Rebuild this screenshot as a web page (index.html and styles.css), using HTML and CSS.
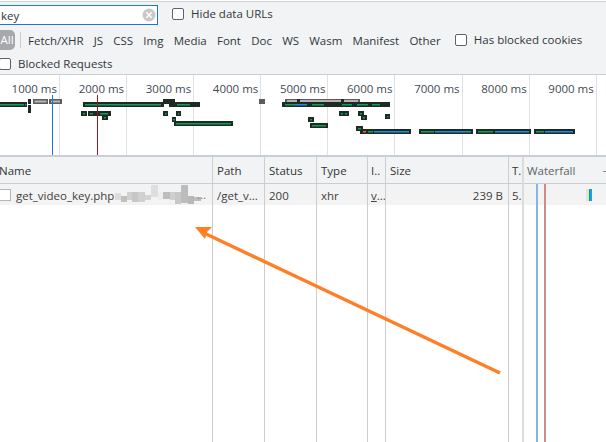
FILE: index.html
```html
<!DOCTYPE html>
<html lang="en">
<head>
<meta charset="utf-8">
<title>Network panel</title>
<link rel="stylesheet" href="styles.css">
</head>
<body>
<div class="page">
  <section class="toolbar">
    <div class="row row-search">
      <div class="search">
        <span class="search-text">key</span>
        <svg class="clear" width="14" height="14" viewBox="0 0 14 14"><circle cx="7" cy="7" r="6.500" fill="#c9c9c9"/><path d="M4.300 4.300l5.400 5.400M9.700 4.300l-5.400 5.400" stroke="#fff" stroke-width="1.400"/></svg>
      </div>
      <label class="check check-hide"><span class="box"></span>Hide data URLs</label>
    </div>
    <div class="row row-types">
      <span class="pill">All</span>
      <span class="sep"></span>
      <span class="type">Fetch/XHR</span>
      <span class="type">JS</span>
      <span class="type">CSS</span>
      <span class="type">Img</span>
      <span class="type">Media</span>
      <span class="type">Font</span>
      <span class="type">Doc</span>
      <span class="type">WS</span>
      <span class="type">Wasm</span>
      <span class="type">Manifest</span>
      <span class="type">Other</span>
      <label class="check check-cookies"><span class="box"></span>Has blocked cookies</label>
    </div>
    <div class="row row-blocked">
      <label class="check"><span class="box"></span>Blocked Requests</label>
    </div>
  </section>

  <section class="overview">
    <div class="ticks">
      <span class="tick">1000 ms</span>
      <span class="tick">2000 ms</span>
      <span class="tick">3000 ms</span>
      <span class="tick">4000 ms</span>
      <span class="tick">5000 ms</span>
      <span class="tick">6000 ms</span>
      <span class="tick">7000 ms</span>
      <span class="tick">8000 ms</span>
      <span class="tick">9000 ms</span>
    </div>
    <svg class="bars" width="606" height="80" viewBox="0 75 606 80">
      <g class="grey">
        <rect x="33" y="99" width="15" height="5"/><rect x="49" y="99" width="13" height="5"/>
        <rect x="259" y="99" width="6" height="5"/><rect x="285" y="99" width="75" height="4"/>
      </g>
      <g class="greyin">
        <rect x="34.500" y="100.500" width="12" height="2"/><rect x="51" y="100.500" width="9" height="2"/>
        <rect x="287" y="100" width="71" height="2"/>
      </g>
      <g class="dark">
        <rect x="28" y="99" width="3" height="5"/><rect x="28" y="105" width="3" height="8"/>
        <rect x="163" y="99" width="12" height="5"/><rect x="297" y="99" width="3" height="4"/><rect x="341" y="99" width="3" height="4"/>
        <rect x="0" y="102" width="27" height="5"/><rect x="83" y="102" width="81" height="5"/><rect x="169" y="102" width="31" height="5"/><rect x="282" y="102" width="108" height="5"/>
        <rect x="81" y="111" width="6" height="5"/><rect x="88" y="111" width="9" height="5"/><rect x="98" y="111" width="13" height="5"/><rect x="102" y="115" width="6" height="5"/>
        <rect x="163" y="111" width="5" height="5"/><rect x="176" y="111" width="5" height="5"/>
        <rect x="172" y="117" width="4" height="5"/><rect x="174" y="121" width="59" height="5"/>
        <rect x="339" y="111" width="10" height="5"/><rect x="358" y="111" width="6" height="5"/><rect x="361" y="115" width="6" height="5"/><rect x="385" y="114" width="5" height="5"/>
        <rect x="308" y="117" width="6" height="5"/><rect x="310" y="123" width="18" height="5"/><rect x="356" y="126" width="7" height="5"/>
        <rect x="360" y="129" width="51" height="5"/><rect x="419" y="129" width="54" height="5"/><rect x="476" y="129" width="55" height="5"/><rect x="534" y="129" width="41" height="5"/>
      </g>
      <g class="green">
        <rect x="0" y="104" width="24" height="1.500"/><rect x="85" y="104" width="76" height="1.500"/><rect x="177" y="104" width="13" height="1.500"/>
        <rect x="285" y="104" width="10" height="1.500"/><rect x="312" y="104" width="12" height="1.500"/><rect x="342" y="104" width="10" height="1.500"/><rect x="358" y="104" width="10" height="1.500"/><rect x="372" y="104" width="8" height="1.500"/>
        <rect x="83" y="113" width="2" height="1.500"/><rect x="90" y="113" width="3" height="1.500"/><rect x="100" y="113" width="8" height="1.500"/><rect x="104" y="117" width="2" height="1.500"/>
        <rect x="165" y="113" width="1.500" height="1.500"/><rect x="178" y="113" width="1.500" height="1.500"/><rect x="173" y="119" width="2" height="1.500"/><rect x="176" y="123" width="55" height="1.500"/>
        <rect x="341" y="113" width="2" height="1.500"/><rect x="345" y="113" width="2" height="1.500"/><rect x="360" y="113" width="2" height="1.500"/><rect x="363" y="117" width="2" height="1.500"/><rect x="387" y="116" width="1.500" height="1.500"/>
        <rect x="310" y="119" width="2" height="1.500"/><rect x="312" y="125" width="14" height="1.500"/><rect x="358" y="128" width="3" height="1.500"/>
        <rect x="368" y="131" width="5" height="1.500"/><rect x="421" y="131" width="13" height="1.500"/><rect x="478" y="131" width="15" height="1.500"/><rect x="536" y="131" width="8" height="1.500"/>
      </g>
      <g class="blue">
        <rect x="25" y="104" width="1.500" height="1.500"/><rect x="295" y="104" width="12" height="1.500"/><rect x="357" y="104" width="1.500" height="1.500"/>
        <rect x="374" y="131" width="35" height="1.500"/><rect x="435" y="131" width="36" height="1.500"/><rect x="495" y="131" width="34" height="1.500"/><rect x="545" y="131" width="28" height="1.500"/>
      </g>
      <rect class="orange" x="363" y="131" width="3" height="1.500"/>
      <rect class="mark-blue" x="52" y="95" width="1" height="60"/>
      <rect class="mark-red" x="97" y="95" width="1" height="60"/>
    </svg>
  </section>

  <section class="table">
    <div class="col col-name">
      <div class="head"><span class="name-label">Name</span></div>
      <div class="cell">
        <span class="row-box"></span>
        <span class="file">get_video_key.php</span>
        <svg class="mosaic" width="88" height="21" viewBox="0 0 88 21">
          <rect x="2" y="9" width="6" height="7" fill="#dcdcdc"/><rect x="8" y="12" width="6" height="6" fill="#c0c0c0"/>
          <rect x="14" y="8" width="5" height="8" fill="#d0d0d0"/><rect x="19" y="8" width="6" height="10" fill="#c6c6c6"/>
          <rect x="25" y="8" width="7" height="10" fill="#d0d0d0"/><rect x="32" y="11" width="6" height="5" fill="#d4d4d4"/>
          <rect x="38" y="1" width="7" height="12" fill="#dedede"/><rect x="45" y="8" width="5" height="8" fill="#eeeeee"/>
          <rect x="50" y="8" width="7" height="7" fill="#bdbdbd"/><rect x="57" y="8" width="5" height="8" fill="#cfcfcf"/>
          <rect x="62" y="8" width="6" height="12" fill="#c8c8c8"/><rect x="68" y="1" width="7" height="18" fill="#bcbcbc"/>
          <rect x="75" y="12" width="6" height="8" fill="#b8b8b8"/><rect x="81" y="13" width="7" height="4" fill="#bdbdbd"/>
        </svg>
        <span class="more">...</span>
      </div>
    </div>
    <div class="col col-path">
      <div class="head">Path</div>
      <div class="cell">/get_v...</div>
    </div>
    <div class="col col-status">
      <div class="head">Status</div>
      <div class="cell">200</div>
    </div>
    <div class="col col-type">
      <div class="head">Type</div>
      <div class="cell">xhr</div>
    </div>
    <div class="col col-init">
      <div class="head">I..</div>
      <div class="cell"><u>v</u>...</div>
    </div>
    <div class="col col-size">
      <div class="head">Size</div>
      <div class="cell cell-right">239 B</div>
    </div>
    <div class="col col-time">
      <div class="head">T.</div>
      <div class="cell">5.</div>
    </div>
    <div class="col col-fall">
      <div class="head">Waterfall<span class="sort-mark"></span></div>
      <div class="cell">
        <span class="fall-wait"></span><span class="fall-green"></span><span class="fall-blue"></span>
      </div>
      <span class="line line-blue"></span>
      <span class="line line-red"></span>
    </div>
  </section>

  <svg class="arrow" width="606" height="442" viewBox="0 0 606 442">
    <path d="M500 373L204 233" fill="none" stroke="#ff7f27" stroke-width="3.500"/>
    <polygon points="195,227 212,227 207,232 205,239" fill="#ff7f27"/>
  </svg>
</div>
</body>
</html>
```
FILE: styles.css
```css
* { box-sizing: border-box; }
html, body { margin: 0; height: 100%; background: #fff; overflow: hidden; }
.page {
  position: relative;
  width: 606px;
  height: 442px;
  overflow: hidden;
  display: flex;
  flex-direction: column;
  font: 11.5px/16px "Open Sans", "Noto Sans", sans-serif;
  color: #33373b;
}

.toolbar {
  height: 74px;
  padding-top: 1px;
  background: #f1f3f4;
  border-top: 1px solid #cfd1d4;
  border-bottom: 1px solid #cacdd1;
  margin-top: 1px;
  flex: none;
}
.row { display: flex; align-items: center; }
.row-search { height: 21px; margin-top: 1px; }
.search {
  width: 160px;
  height: 20px;
  margin-left: -2px;
  padding: 0 1px 0 2px;
  display: flex;
  align-items: center;
  justify-content: space-between;
  background: #fff;
  border: 1px solid #1a73e8;
}
.search-text { margin-top: 2px; color: #333; }
.clear { display: block; }
.check { display: flex; align-items: center; gap: 7px; }
.box {
  width: 12px;
  height: 12px;
  background: #fff;
  border: 1px solid #5f6368;
  border-radius: 2px;
  flex: none;
}
.check-hide { margin-left: 14px; margin-top: -1px; }
.row-types { height: 26px; margin-top: 2px; }
.pill {
  width: 16px;
  height: 20px;
  margin-left: -1px;
  border-radius: 0 5px 5px 0;
  background: #a6a8ab;
  color: #fff;
  text-align: center;
  line-height: 20px;
}
.sep { width: 1px; height: 16px; margin: 0 7px 0 5px; background: #ccc; }
.type { margin-right: 10.2px; margin-top: 1px; white-space: nowrap; }
.check-cookies { margin-left: 4px; margin-top: -1px; }
.row-blocked { height: 22px; margin-left: -1px; }

.overview { position: relative; height: 80px; flex: none; }
.ticks {
  display: grid;
  grid-template-columns: 60px repeat(8, 67.1px) 1fr;
  height: 100%;
}
.tick {
  padding: 6px 2px 0 0;
  text-align: right;
  white-space: nowrap;
  border-right: 1px solid #e1e1e1;
  color: #3f4a55;
}
.bars { position: absolute; left: 0; top: 0; display: block; }
.grey { fill: #5c5c5c; }
.greyin { fill: #b4b4b4; }
.dark { fill: #1f2a25; }
.green { fill: #0f9d58; }
.blue { fill: #1a8fe0; }
.orange { fill: #e8710a; }
.mark-blue { fill: #1a73e8; }
.mark-red { fill: #9c1c1c; }

.table {
  flex: 1;
  display: flex;
  border-top: 2px solid #cacdd1;
}
.col {
  position: relative;
  flex: none;
  border-right: 1px solid #cacdd1;
}
.col-name { width: 213px; }
.col-path { width: 52px; }
.col-status { width: 52px; }
.col-type { width: 51px; }
.col-init { width: 18px; }
.col-size { width: 123px; }
.col-time { width: 15px; border-right: 2px solid #dcdcdc; }
.col-fall { flex: 1; border-right: 0; }
.head {
  position: relative;
  height: 27px;
  padding: 1px 0 0 4px;
  display: flex;
  align-items: center;
  background: #f1f3f4;
  border-bottom: 1px solid #cacdd1;
  white-space: nowrap;
  overflow: hidden;
  color: #333;
}
.cell {
  position: relative;
  height: 21px;
  padding: 2px 0 0 4px;
  display: flex;
  align-items: center;
  background: #f3f3f3;
  white-space: nowrap;
  overflow: hidden;
  color: #404040;
}
.cell-right { justify-content: flex-end; padding-right: 5px; }
.col-init .head, .col-init .cell { padding-left: 3px; }
.col-time .head, .col-time .cell { padding-left: 3px; }
.col-name .head { padding-left: 0; }
.name-label { margin-left: -1px; }
.col-name .cell { padding-left: 0; }
.row-box {
  width: 11px;
  height: 12px;
  margin: -2px 5px 0 0;
  background: #fff;
  border: 1px solid #b4b4b4;
  border-left: 0;
  flex: none;
}
.mosaic { flex: none; margin-top: -2px; margin-left: -1px; }
.more { position: absolute; left: 197px; top: 3px; color: #777; }
.col-fall .head { color: #5f6368; padding-left: 3px; }
.sort-mark { position: absolute; right: 0; top: 14px; width: 3px; height: 1px; background: #888; }
.fall-wait { position: absolute; left: 62px; top: 5px; width: 3px; height: 12px; background: #e2e2e2; }
.fall-green { position: absolute; left: 65px; top: 5px; width: 1px; height: 12px; background: #0f9d58; }
.fall-blue { position: absolute; left: 66px; top: 5px; width: 2px; height: 12px; background: #1a9fe8; }
.line { position: absolute; top: 27px; bottom: 0; width: 2px; }
.line-blue { left: 12px; background: #86b4e8; }
.line-red { left: 20px; background: #d28a86; }

.arrow { position: absolute; left: 0; top: 0; pointer-events: none; }
```
